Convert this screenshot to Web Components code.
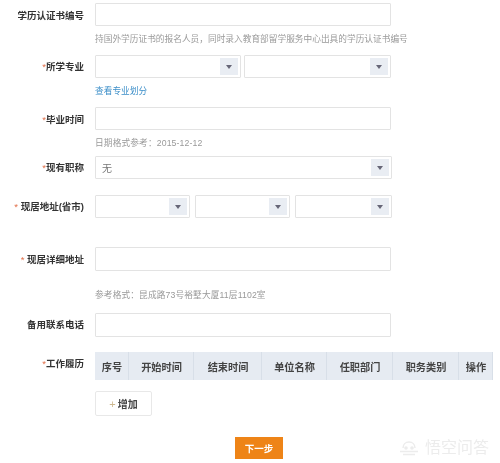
<!DOCTYPE html>
<html lang="zh">
<head>
<meta charset="utf-8">
<style>
  html, body { margin: 0; padding: 0; background: #fff; }
  body { font-family: "Liberation Sans", "Noto Sans CJK SC", sans-serif; color: #333; overflow: hidden; height: 463px; }
  #page { padding-top: 3px; position: relative; height: 460px; filter: blur(0.4px); }
</style>
</head>
<body>
<div id="page">
  <form-row label="学历认证书编号" gap="6" nudge="1">
    <text-box></text-box>
    <form-hint>持国外学历证书的报名人员，同时录入教育部留学服务中心出具的学历认证书编号</form-hint>
  </form-row>
  <form-row label="所学专业" required gap="10">
    <select-group>
      <select-box style="width:146px"></select-box>
      <select-box style="width:147px"></select-box>
    </select-group>
    <form-hint link>查看专业划分</form-hint>
  </form-row>
  <form-row label="毕业时间" required gap="10" nudge="1">
    <text-box></text-box>
    <form-hint wide>日期格式参考：2015-12-12</form-hint>
  </form-row>
  <form-row label="现有职称" required gap="7">
    <select-box style="width:297px" value="无"></select-box>
  </form-row>
  <form-row label="现居地址(省市)" required spaced gap="16">
    <select-group gap="5">
      <select-box style="width:95px"></select-box>
      <select-box style="width:95px"></select-box>
      <select-box style="width:97px"></select-box>
    </select-group>
  </form-row>
  <form-row label="现居详细地址" required spaced gap="29" nudge="1">
    <text-box tall></text-box>
    <form-hint far wide>参考格式：昆成路73号裕墅大厦11层1102室</form-hint>
  </form-row>
  <form-row label="备用联系电话" gap="12">
    <text-box tall></text-box>
  </form-row>
  <form-row label="工作履历" required gap="15" top>
    <work-table></work-table>
    <add-button>增加</add-button>
  </form-row>
  <next-button>下一步</next-button>
  <wukong-mark></wukong-mark>
</div>

<script>
class FormRow extends HTMLElement {
  constructor() {
    super();
    this.attachShadow({ mode: "open" });
    const required = this.hasAttribute("required");
    const spaced = this.hasAttribute("spaced");
    this.shadowRoot.innerHTML = `
      <style>
        :host {
          display: grid;
          grid-template-columns: 84px 1fr;
          column-gap: 11px;
          margin-top: ${this.getAttribute("gap")}px;
        }
        :host(:first-child) { margin-top: 0; }
        #label {
          font-size: 9.5px;
          font-weight: bold;
          color: #333;
          text-align: right;
          white-space: nowrap;
          line-height: 23px;
          padding-top: ${this.getAttribute("nudge") || 0}px;
        }
        :host([top]) #label { line-height: 24px; }
        :host([required]) #star { color: #e2704a; font-weight: normal; }
      </style>
      <div id="label">${required ? `<span id="star">*${spaced ? " " : ""}</span>` : ""}${this.getAttribute("label")}</div>
      <div><slot></slot></div>
    `;
  }
}

class TextBox extends HTMLElement {
  constructor() {
    super();
    this.attachShadow({ mode: "open" });
    this.shadowRoot.innerHTML = `
      <style>
        :host {
          display: block;
          box-sizing: border-box;
          width: 296px;
          height: 23px;
          background: #fff;
          border: 1px solid #e3e3e3;
          border-radius: 1px;
        }
        :host([tall]) { height: 24px; }
      </style>
    `;
  }
}

class SelectBox extends HTMLElement {
  constructor() {
    super();
    this.attachShadow({ mode: "open" });
    this.shadowRoot.innerHTML = `
      <style>
        :host {
          display: flex;
          box-sizing: border-box;
          height: 23px;
          align-items: center;
          justify-content: space-between;
          padding: 0 2px 0 6px;
          background: #fff;
          border: 1px solid #e3e3e3;
          border-radius: 1px;
          font-size: 10px;
          color: #777;
        }
        #arrow {
          width: 18px;
          height: 17px;
          background: #e9edf3;
          display: flex;
          align-items: center;
          justify-content: center;
        }
        svg { display: block; }
      </style>
      <span>${this.getAttribute("value") || ""}</span>
      <div id="arrow"><svg width="6" height="4" viewBox="0 0 6 4"><path d="M0 0H6L3 4Z" fill="#667"/></svg></div>
    `;
  }
}

class SelectGroup extends HTMLElement {
  constructor() {
    super();
    this.attachShadow({ mode: "open" });
    this.shadowRoot.innerHTML = `
      <style>
        :host { display: flex; gap: ${this.getAttribute("gap") || 3}px; width: 297px; }
      </style>
      <slot></slot>
    `;
  }
}

class FormHint extends HTMLElement {
  constructor() {
    super();
    this.attachShadow({ mode: "open" });
    this.shadowRoot.innerHTML = `
      <style>
        :host {
          display: block;
          margin-top: 7px;
          font-size: 8.7px;
          line-height: 12px;
          color: #999;
          white-space: nowrap;
        }
        :host([link]) { color: #3d8fc9; }
        :host([far]) { margin-top: 18px; }
        :host([wide]) { letter-spacing: 0.13px; }
      </style>
      <slot></slot>
    `;
  }
}

class WorkTable extends HTMLElement {
  constructor() {
    super();
    this.attachShadow({ mode: "open" });
    const cols = [["序号", 34], ["开始时间", 65], ["结束时间", 68], ["单位名称", 65], ["任职部门", 66], ["职务类别", 66], ["操作", 34]];
    this.shadowRoot.innerHTML = `
      <style>
        :host {
          display: flex;
          height: 28px;
          width: 398px;
          background: #e6ebf2;
        }
        div {
          display: flex;
          align-items: center;
          justify-content: center;
          box-sizing: border-box;
          padding-left: 1px;
          border-right: 1px solid #d8dfe8;
          font-size: 10.2px;
          font-weight: bold;
          color: #444;
        }
      </style>
      ${cols.map(c => `<div style="width:${c[1]}px">${c[0]}</div>`).join("")}
    `;
  }
}

class AddButton extends HTMLElement {
  constructor() {
    super();
    this.attachShadow({ mode: "open" });
    this.shadowRoot.innerHTML = `
      <style>
        :host {
          display: flex;
          box-sizing: border-box;
          width: 57px;
          height: 25px;
          margin-top: 11px;
          align-items: center;
          justify-content: center;
          gap: 2px;
          border: 1px solid #e8e8e8;
          border-radius: 2px;
          font-size: 10px;
          font-weight: bold;
          color: #444;
        }
        #plus { color: #cdb88f; font-weight: normal; font-size: 11px; }
      </style>
      <span id="plus">+</span><slot></slot>
    `;
  }
}

class NextButton extends HTMLElement {
  constructor() {
    super();
    this.attachShadow({ mode: "open" });
    this.shadowRoot.innerHTML = `
      <style>
        :host {
          display: flex;
          box-sizing: border-box;
          width: 48px;
          height: 22px;
          margin: 21px 0 0 235px;
          align-items: center;
          justify-content: center;
          background: #ee8417;
          color: #fff;
          font-size: 9.5px;
          font-weight: bold;
        }
      </style>
      <slot></slot>
    `;
  }
}

// watermark sits over the page corner
class WukongMark extends HTMLElement {
  constructor() {
    super();
    this.attachShadow({ mode: "open" });
    this.shadowRoot.innerHTML = `
      <style>
        :host {
          position: absolute;
          left: 400px;
          top: 439px;
          display: flex;
          align-items: center;
          gap: 7px;
          color: #ececec;
          font-size: 16px;
          line-height: 18px;
          white-space: nowrap;
        }
      </style>
      <svg width="18" height="15" viewBox="0 0 18 15"><path d="M3 7C3 3.5 5.5 1 9 1S15 3.500 15 7" fill="none" stroke="#ececec" stroke-width="1.500"/><circle cx="6" cy="7" r="1.800" fill="#ececec"/><circle cx="12" cy="7" r="1.800" fill="#ececec"/><path d="M0 10.500H18M3 13.500H15" stroke="#ececec" stroke-width="1.500"/></svg>
      <span>悟空问答</span>
    `;
  }
}

customElements.define("form-row", FormRow);
customElements.define("text-box", TextBox);
customElements.define("select-box", SelectBox);
customElements.define("select-group", SelectGroup);
customElements.define("form-hint", FormHint);
customElements.define("work-table", WorkTable);
customElements.define("add-button", AddButton);
customElements.define("next-button", NextButton);
customElements.define("wukong-mark", WukongMark);
</script>
</body>
</html>
